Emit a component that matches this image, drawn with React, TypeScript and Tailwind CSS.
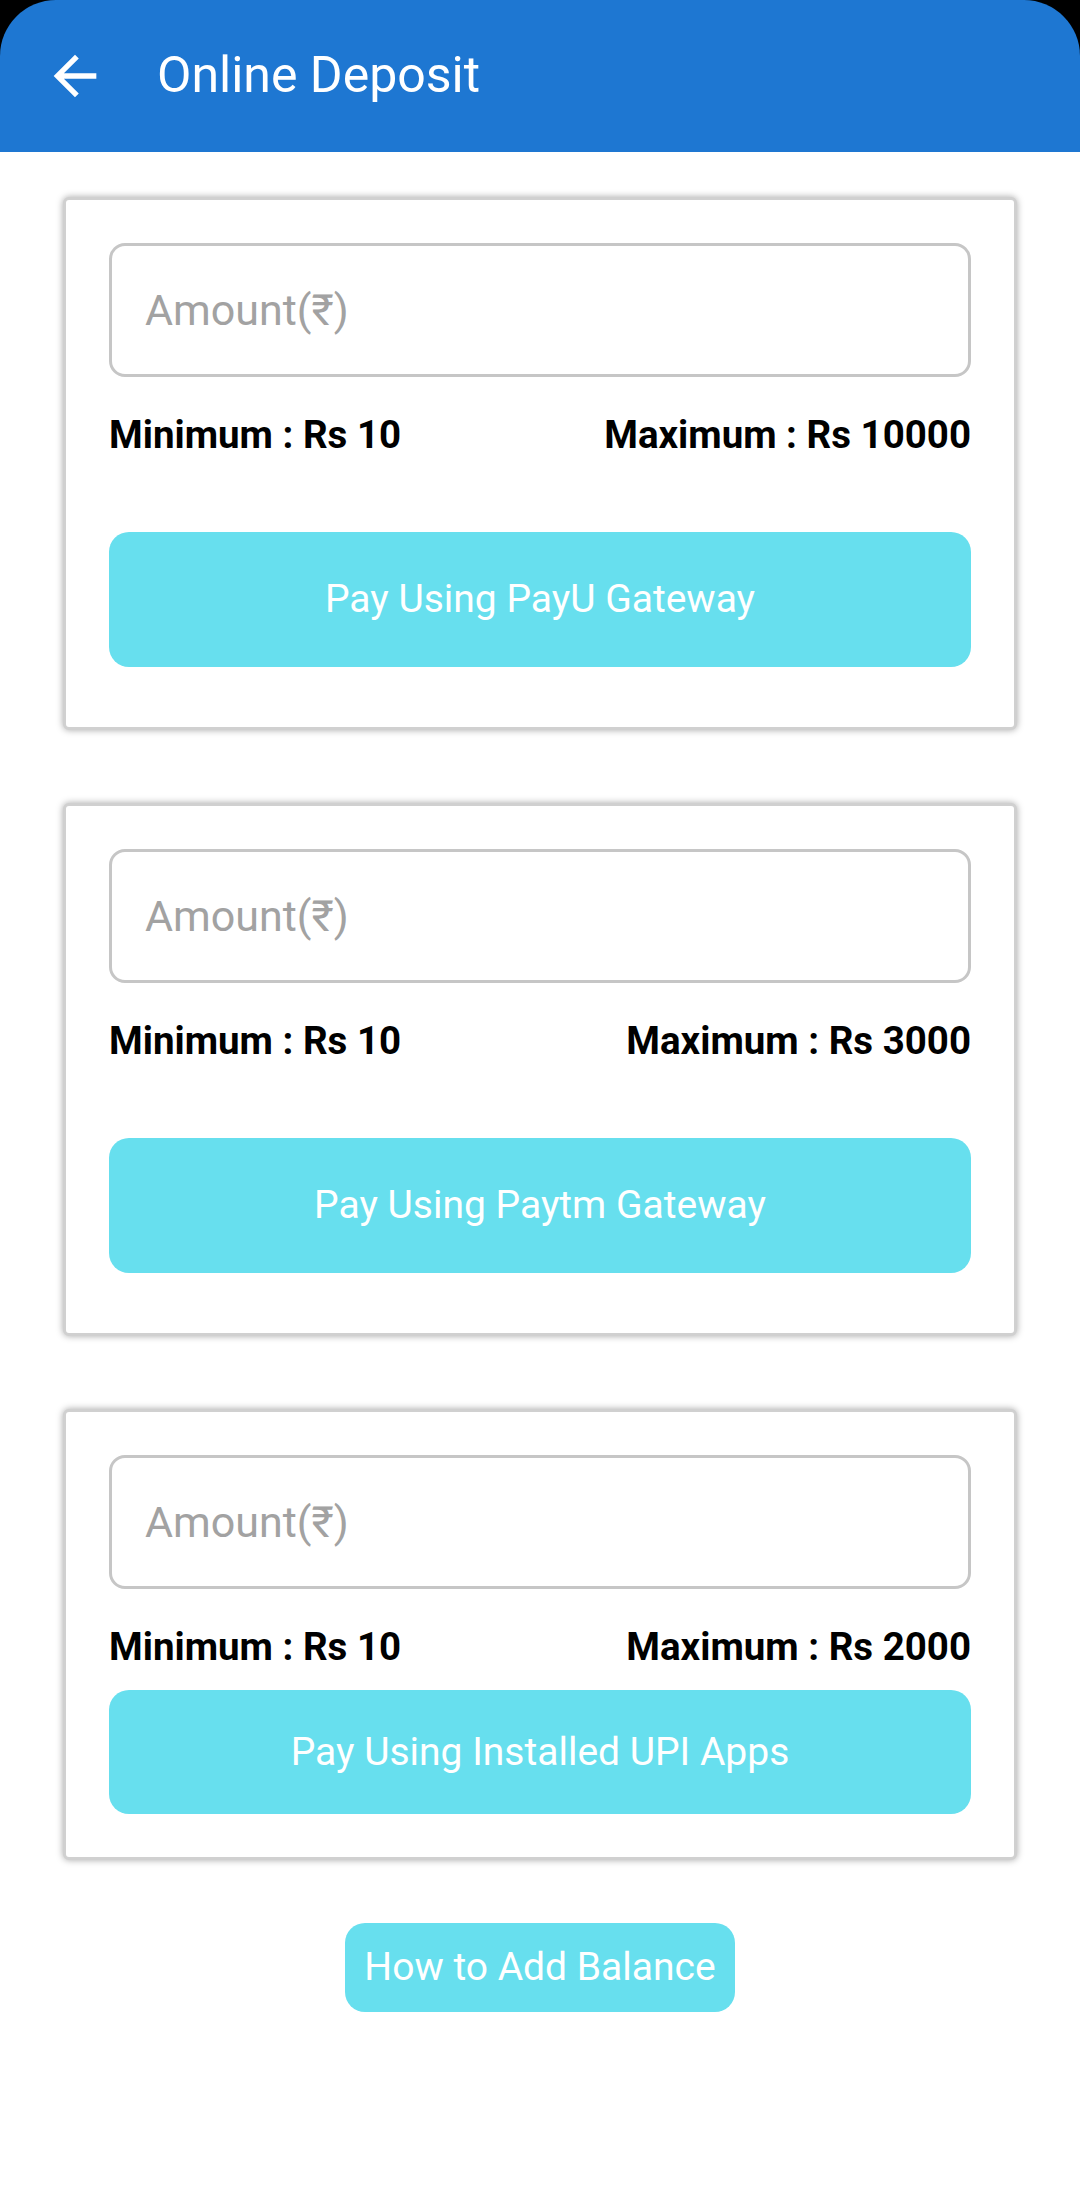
import React from "react";

type Gateway = {
    label: string;
    max: number;
    compact?: boolean;
};

const gateways: Gateway[] = [
    { label: "Pay Using PayU Gateway", max: 10000 },
    { label: "Pay Using Paytm Gateway", max: 3000 },
    { label: "Pay Using Installed UPI Apps", max: 2000, compact: true },
];

function BackArrow() {
    return (
        <svg width="64" height="64" viewBox="0 0 24 24" fill="#ffffff">
            <path d="M20 11H7.83l5.59-5.59L12 4l-8 8 8 8 1.41-1.41L7.83 13H20v-2z" />
        </svg>
    );
}

function DepositCard({ gateway }: { gateway: Gateway }) {
    return (
        <div
            className={`mx-[63px] bg-white rounded-[6px] border-[3px] border-[#d0d0d0] shadow-[0_0_7px_rgba(0,0,0,0.35)] px-[43px] pt-[43px] ${
                gateway.compact ? "pb-[43px]" : "pb-[60px]"
            }`}
        >
            <input
                type="text"
                placeholder="Amount(₹)"
                className="w-full h-[134px] rounded-[16px] border-[3px] border-[#c6c6c6] px-[33px] text-[43px] text-[#222] placeholder:text-[#a2a2a2] outline-none bg-white"
            />
            <div className="mt-[36px] h-[44px] flex items-center justify-between text-[38.5px] font-bold text-black leading-none">
                <span>Minimum : Rs 10</span>
                <span>Maximum : Rs {gateway.max}</span>
            </div>
            <button
                className={`w-full rounded-[20px] bg-[#67dfee] text-white text-[39px] ${
                    gateway.compact ? "mt-[21px] h-[124px]" : "mt-[75px] h-[135px]"
                }`}
            >
                {gateway.label}
            </button>
        </div>
    );
}

export default function App() {
    return (
        <div
            className="w-[1080px] min-h-[2188px] bg-white"
            style={{ fontFamily: "Roboto, 'Noto Sans', sans-serif" }}
        >
            <div className="bg-black">
                <header className="h-[152px] bg-[#1e77d2] rounded-t-[56px] flex items-center pl-[43px]">
                    <BackArrow />
                    <h1 className="ml-[50px] text-[50px] text-white leading-none -mt-[2px]">Online Deposit</h1>
                </header>
            </div>

            <div className="pt-[45px] flex flex-col gap-[73px]">
                {gateways.map((g) => (
                    <DepositCard key={g.label} gateway={g} />
                ))}
            </div>

            <div className="mt-[63px] flex justify-center">
                <button className="h-[89px] px-[19px] rounded-[20px] bg-[#67dfee] text-white text-[39px]">
                    How to Add Balance
                </button>
            </div>
        </div>
    );
}
